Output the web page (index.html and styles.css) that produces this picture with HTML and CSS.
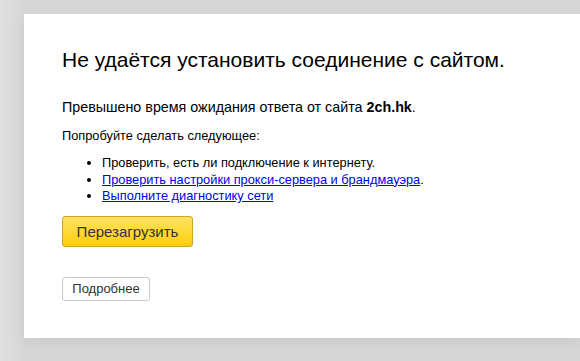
FILE: index.html
```html
<!DOCTYPE html>
<html lang="ru">
<head>
<meta charset="utf-8">
<link rel="stylesheet" href="styles.css">
</head>
<body>
<div class="page">
  <main class="card">
    <h1 class="title">Не удаётся установить соединение с сайтом.</h1>
    <p class="lead">Превышено время ожидания ответа от сайта <b>2ch.hk</b>.</p>
    <p class="hint">Попробуйте сделать следующее:</p>
    <ul class="tips">
      <li>Проверить, есть ли подключение к интернету.</li>
      <li><a href="#">Проверить настройки прокси-сервера и брандмауэра</a>.</li>
      <li><a href="#">Выполните диагностику сети</a></li>
    </ul>
    <button class="btn-reload">Перезагрузить</button>
    <button class="btn-more">Подробнее</button>
  </main>
</div>
</body>
</html>
```
FILE: styles.css
```css
html, body {
  margin: 0;
  padding: 0;
  height: 100%;
}
body {
  background: #d8d8d8;
  font-family: "Liberation Sans", Arial, sans-serif;
  color: #000;
  overflow: hidden;
}
.page {
  padding: 14px 0 0 24px;
  background: linear-gradient(to right, #e0e0e0, #d6d6d6 24px);
  height: 100%;
  box-sizing: border-box;
}
.card {
  background: #fff;
  height: 324px;
  box-sizing: border-box;
  padding: 31px 0 0 38px;
  box-shadow: 0 4px 12px rgba(0,0,0,0.06);
}
.title {
  margin: 0;
  font-size: 21px;
  font-weight: normal;
  line-height: 30px;
}
.lead {
  margin: 23px 0 0;
  font-size: 14.3px;
  line-height: 18px;
}
.hint {
  margin: 12px 0 0;
  font-size: 12.8px;
  line-height: 16px;
}
.tips {
  margin: 11px 0 0;
  padding-left: 40px;
  font-size: 12.8px;
  line-height: 16.5px;
}
.tips a {
  color: #0000ee;
}
button {
  display: block;
  font-family: "Liberation Sans", Arial, sans-serif;
  cursor: pointer;
}
.btn-reload {
  margin-top: 11px;
  width: 131px;
  height: 31px;
  border: 1px solid #c9a52b;
  border-radius: 3px;
  background: linear-gradient(to bottom, #ffe163, #ffcf0a);
  color: #333;
  font-size: 15px;
  padding: 0;
}
.btn-more {
  margin-top: 30px;
  width: 88px;
  height: 24px;
  border: 1px solid #c8c8c8;
  border-radius: 3px;
  background: #fff;
  color: #333;
  font-size: 13px;
  padding: 0;
}
```
